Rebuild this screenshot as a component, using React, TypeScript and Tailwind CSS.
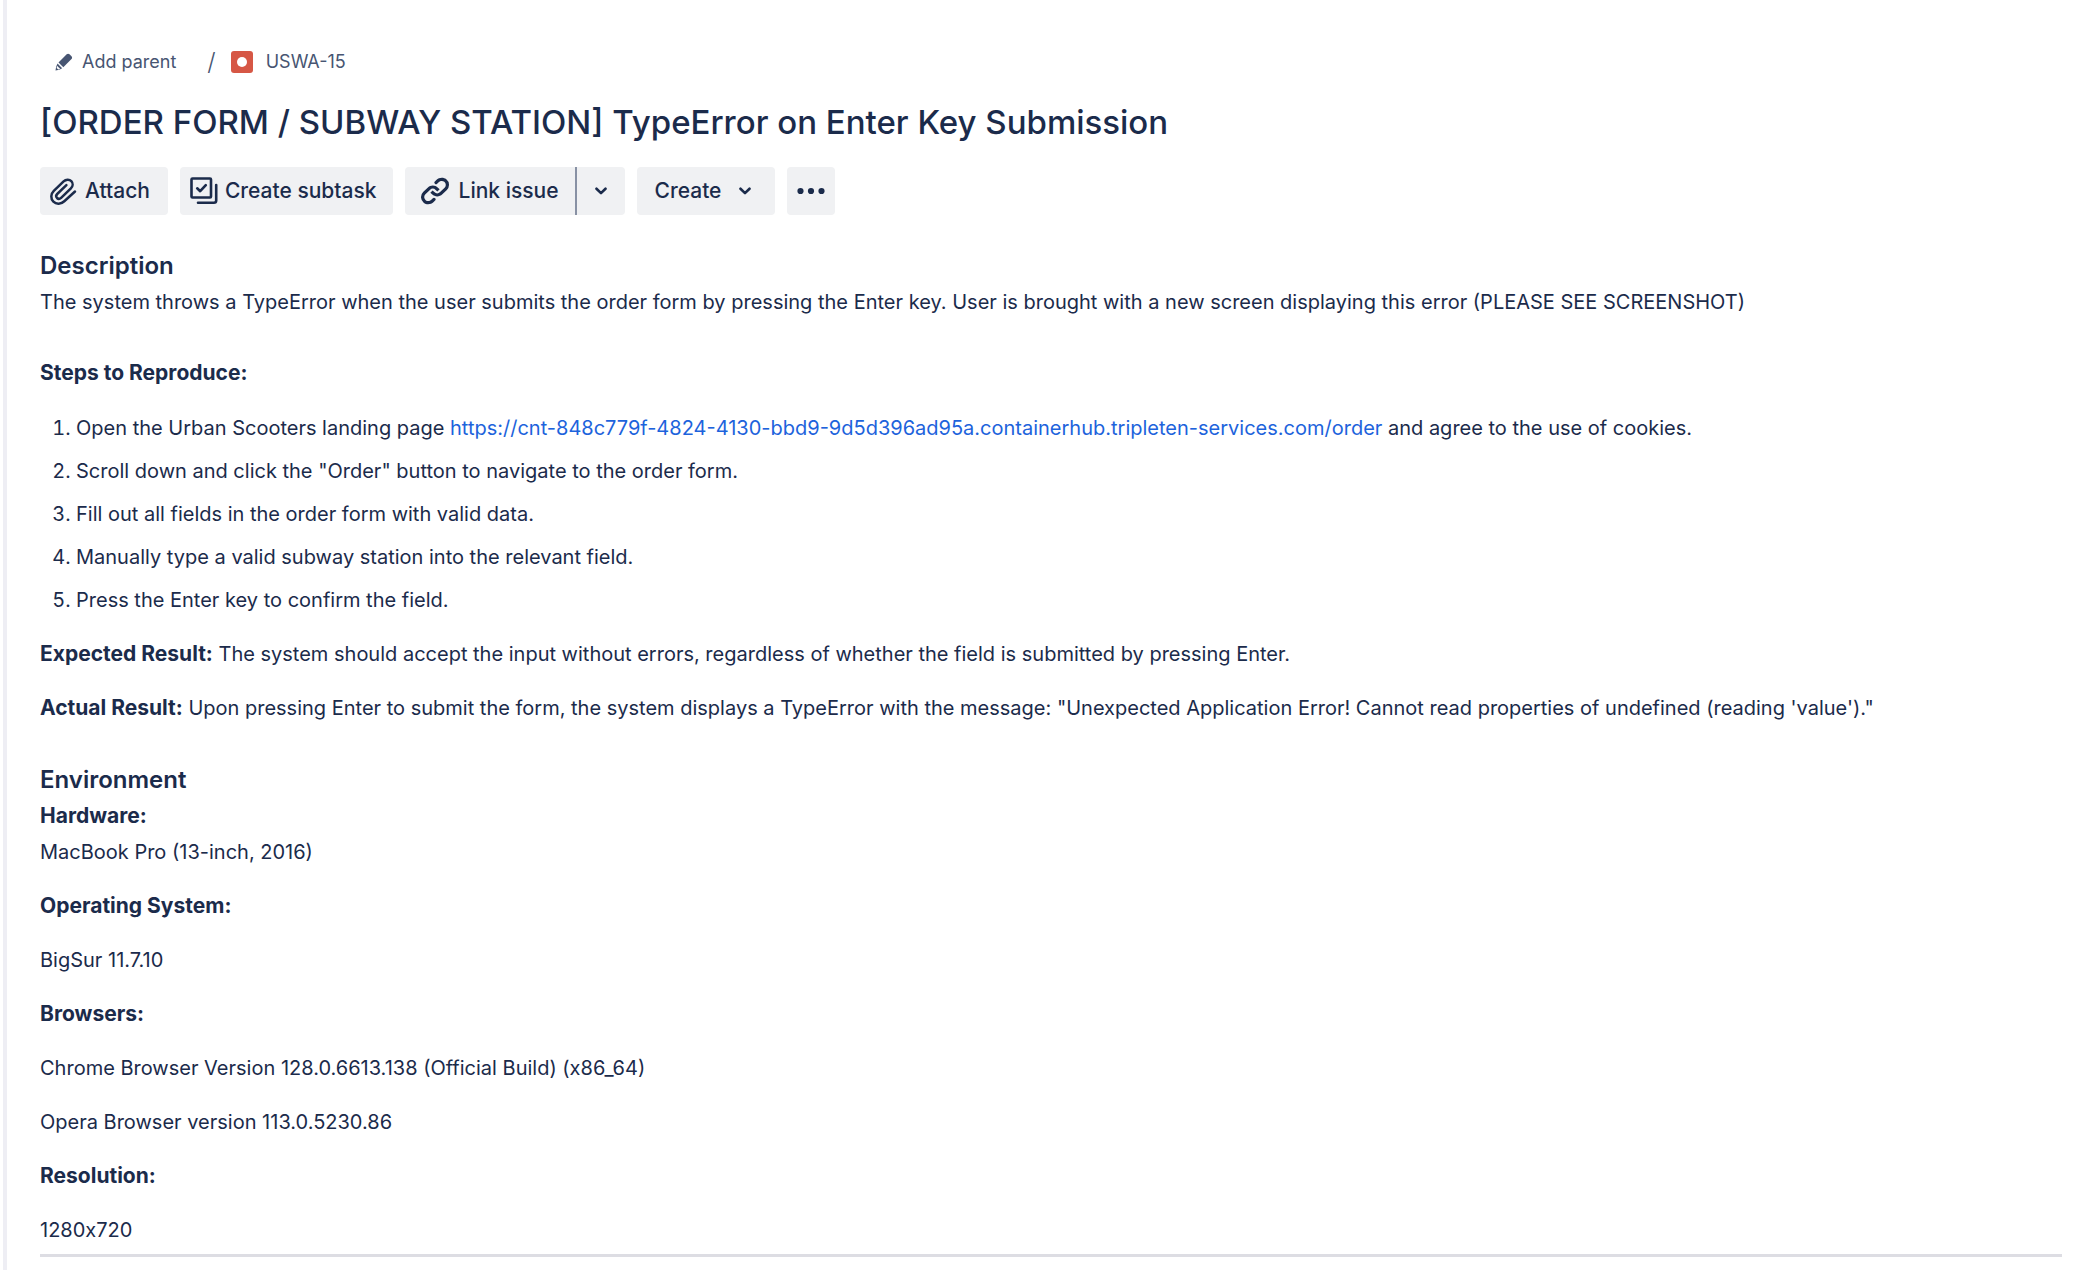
import type { ReactNode } from 'react';

function PencilIcon() {
  return (
    <svg className="size-5" viewBox="0 0 20 20" fill="currentColor" aria-hidden="true">
      <path d="M12.700 2.300c.8-.8 2-.8 2.800 0l2 2c.8.8.8 2 0 2.800L9.300 15.300 4.500 10.500z" />
      <path d="M3.500 11.600 8.200 16.300 5.300 17.800 1.500 18.500 2.200 14.500z" />
      <path d="M3 13.700 6.300 17 4.200 17.500 2.700 16z" fill="#fff" />
    </svg>
  );
}

function BugIcon() {
  return (
    <svg className="size-[22px]" viewBox="0 0 22 22" aria-hidden="true">
      <rect width="22" height="22" rx="3" fill="#d65745" />
      <circle cx="11" cy="11" r="5" fill="#fff" />
    </svg>
  );
}

function AttachIcon() {
  return (
    <svg
      className="size-[30px]"
      viewBox="0 0 30 30"
      fill="none"
      stroke="currentColor"
      strokeWidth="2.5"
      strokeLinecap="round"
      strokeLinejoin="round"
      aria-hidden="true"
    >
      <path d="M27 15.500 16.300 25.200C13 28.300 8.300 28.600 5.400 25.600 2.400 22.500 2.700 18 5.800 14.900L15.600 5.400c2.300-2.200 5.700-2.400 7.700-.3 2 2.100 1.700 5.200-.4 7.300l-9.800 9.400c-1.300 1.200-3 1.300-4.100.2-1.100-1.200-1-2.800.2-4L18.400 9.200" />
    </svg>
  );
}

function SubtaskIcon() {
  return (
    <svg
      className="size-[30px]"
      viewBox="0 0 30 30"
      fill="none"
      stroke="currentColor"
      strokeWidth="2.6"
      strokeLinecap="round"
      strokeLinejoin="round"
      aria-hidden="true"
    >
      <rect x="3.500" y="2.500" width="19.500" height="19" rx="1" />
      <path d="M9.200 12.300 12.200 15.200 17.800 9.200" />
      <path d="M28.200 9v15.500a2.300 2.300 0 0 1-2.300 2.300H10" />
    </svg>
  );
}

function LinkIcon() {
  return (
    <svg className="size-7" viewBox="3 3.500 18 18" fill="currentColor" aria-hidden="true">
      <path d="M12.856 5.457l-.937.92a1.002 1.002 0 0 0 0 1.437 1.047 1.047 0 0 0 1.463 0l.984-.966c.967-.95 2.542-1.135 3.602-.288a2.540 2.540 0 0 1 .203 3.810l-2.903 2.852a2.646 2.646 0 0 1-3.696 0l-1.110-1.090L9 13.570l1.108 1.089c1.822 1.788 4.802 1.788 6.622 0l2.905-2.852a4.558 4.558 0 0 0-.357-6.820c-1.893-1.517-4.695-1.226-6.422.47" />
      <path d="M11.144 19.543l.937-.92a1.002 1.002 0 0 0 0-1.437 1.047 1.047 0 0 0-1.462 0l-.985.966c-.967.950-2.542 1.135-3.602.288a2.540 2.540 0 0 1-.203-3.810l2.903-2.852a2.646 2.646 0 0 1 3.696 0l1.110 1.090L15 11.430l-1.108-1.089c-1.822-1.788-4.802-1.788-6.622 0l-2.905 2.852a4.558 4.558 0 0 0 .357 6.820c1.893 1.517 4.695 1.226 6.422-.47" />
    </svg>
  );
}

function ChevronIcon() {
  return (
    <svg
      className="h-2 w-3"
      viewBox="0 0 12 8"
      fill="none"
      stroke="currentColor"
      strokeWidth="2.6"
      strokeLinecap="round"
      strokeLinejoin="round"
      aria-hidden="true"
    >
      <path d="M1.500 1.700 6 6.100 10.500 1.700" />
    </svg>
  );
}

function MoreIcon() {
  return (
    <svg className="h-2 w-7" viewBox="0 0 28 8" fill="currentColor" aria-hidden="true">
      <circle cx="3.500" cy="4" r="3.100" />
      <circle cx="14" cy="4" r="3.100" />
      <circle cx="24.500" cy="4" r="3.100" />
    </svg>
  );
}

const steps: ReactNode[] = [
  <>
    Open the Urban Scooters landing page{' '}
    <a
      className="text-[#1d63dc]"
      href="https://cnt-848c779f-4824-4130-bbd9-9d5d396ad95a.containerhub.tripleten-services.com/order"
    >
      https://cnt-848c779f-4824-4130-bbd9-9d5d396ad95a.containerhub.tripleten-services.com/order
    </a>{' '}
    and agree to the use of cookies.
  </>,
  'Scroll down and click the "Order" button to navigate to the order form.',
  'Fill out all fields in the order form with valid data.',
  'Manually type a valid subway station into the relevant field.',
  'Press the Enter key to confirm the field.',
];

export default function App() {
  return (
    <div className="min-h-screen bg-white pl-[3px] font-['Inter','Liberation_Sans',sans-serif] text-[#1b2b4b]">
      <main className="min-h-screen border-l-4 border-[#eeeef4] pt-12 pr-[22px] pl-[33px]">
        <nav aria-label="Breadcrumb" className="flex h-7 items-center text-lg text-[#475572]">
          <button type="button" className="ml-3.5 flex items-center gap-2">
            <PencilIcon />
            Add parent
          </button>
          <span className="ml-[31px] text-2xl font-light">/</span>
          <a href="#USWA-15" className="ml-[15px] flex items-center gap-[13px]">
            <BugIcon />
            USWA-15
          </a>
        </nav>

        <h1 className="mt-[22px] text-[33px] leading-[48px] font-medium">
          [ORDER FORM / SUBWAY STATION] TypeError on Enter Key Submission
        </h1>

        <div className="mt-[21px] flex h-12 gap-3 text-[21px] font-medium">
          <button type="button" className="flex items-center gap-[7px] rounded bg-[#f0f1f3] pr-[18px] pl-2">
            <AttachIcon />
            Attach
          </button>
          <button type="button" className="flex items-center gap-[7px] rounded bg-[#f0f1f3] pr-4 pl-2">
            <SubtaskIcon />
            Create subtask
          </button>
          <div className="flex">
            <button type="button" className="flex items-center gap-2.5 rounded-l bg-[#f0f1f3] px-4">
              <LinkIcon />
              Link issue
            </button>
            <button
              type="button"
              aria-label="More link options"
              className="flex w-[50px] items-center justify-center rounded-r border-l-2 border-l-[#8891a4] bg-[#f0f1f3]"
            >
              <ChevronIcon />
            </button>
          </div>
          <button type="button" className="flex items-center gap-[18px] rounded bg-[#f0f1f3] pr-6 pl-[18px]">
            Create
            <ChevronIcon />
          </button>
          <button
            type="button"
            aria-label="More actions"
            className="flex w-12 items-center justify-center rounded bg-[#f0f1f3]"
          >
            <MoreIcon />
          </button>
        </div>

        <section className="mt-[33px] text-xl leading-9">
          <h2 className="text-2xl leading-9 font-semibold">Description</h2>
          <p>
            The system throws a TypeError when the user submits the order form by pressing the Enter key. User is
            brought with a new screen displaying this error (PLEASE SEE SCREENSHOT)
          </p>
          <h3 className="mt-[35px] text-[21px] leading-9 font-bold">Steps to Reproduce:</h3>
          <ol className="mt-[19px] flex list-decimal flex-col gap-[7px] pl-9">
            {steps.map((step, i) => (
              <li key={i}>{step}</li>
            ))}
          </ol>
          <p className="mt-[18px]">
            <strong className="text-[21px]">Expected Result:</strong> The system should accept the input without
            errors, regardless of whether the field is submitted by pressing Enter.
          </p>
          <p className="mt-[18px]">
            <strong className="text-[21px]">Actual Result:</strong> Upon pressing Enter to submit the form, the system
            displays a TypeError with the message: "Unexpected Application Error! Cannot read properties of undefined
            (reading 'value')."
          </p>
        </section>

        <section className="mt-9 flex flex-col gap-[18px] border-b-[3px] border-[#dddde3] pb-1.5 text-xl leading-9">
          <div>
            <h2 className="text-2xl leading-9 font-semibold">Environment</h2>
            <h3 className="text-[21px] leading-9 font-bold">Hardware:</h3>
            <p>MacBook Pro (13-inch, 2016)</p>
          </div>
          <h3 className="text-[21px] leading-9 font-bold">Operating System:</h3>
          <p>BigSur 11.7.10</p>
          <h3 className="text-[21px] leading-9 font-bold">Browsers:</h3>
          <p>Chrome Browser Version 128.0.6613.138 (Official Build) (x86_64)</p>
          <p>Opera Browser version 113.0.5230.86</p>
          <h3 className="text-[21px] leading-9 font-bold">Resolution:</h3>
          <p className="[font-variant-ligatures:no-contextual]">1280x720</p>
        </section>
      </main>
    </div>
  );
}
